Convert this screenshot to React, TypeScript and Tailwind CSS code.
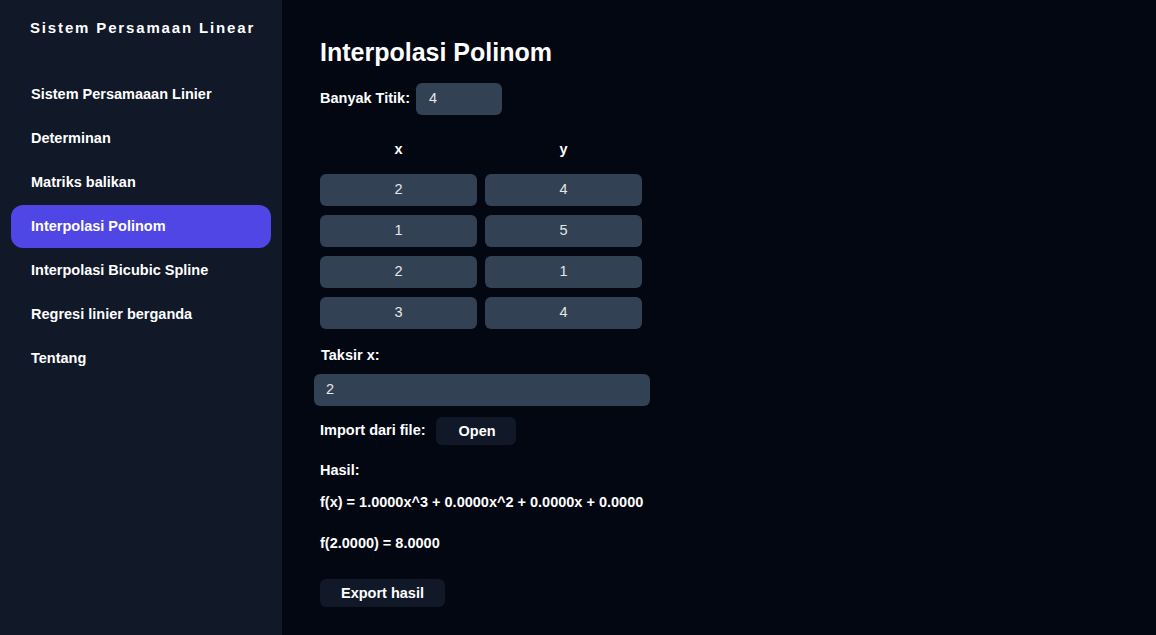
import React from "react";

const nav = [
  "Sistem Persamaaan Linier",
  "Determinan",
  "Matriks balikan",
  "Interpolasi Polinom",
  "Interpolasi Bicubic Spline",
  "Regresi linier berganda",
  "Tentang",
];

const rows = [
  ["2", "4"],
  ["1", "5"],
  ["2", "1"],
  ["3", "4"],
];

export default function App() {
  return (
    <div
      className="flex w-[1156px] h-[635px] overflow-hidden text-white"
      style={{ fontFamily: '"Liberation Sans", Arial, sans-serif' }}
    >
      <aside className="w-[282px] shrink-0 bg-[#111827] flex flex-col">
        <div className="pl-[30px] pt-[19px] text-[15px] font-bold tracking-[1.85px] leading-[18px]">
          Sistem Persamaan Linear
        </div>
        <nav className="flex flex-col gap-[1px] px-[11px] pt-[36px]">
          {nav.map((n) => (
            <div
              key={n}
              className={`h-[43px] flex items-center pl-[20px] pt-[1px] text-[14.5px] font-bold rounded-[12px] ${
                n === "Interpolasi Polinom" ? "bg-[#4f46e5]" : ""
              }`}
            >
              {n}
            </div>
          ))}
        </nav>
      </aside>
      <main className="flex-1 bg-[#030712] pl-[38px] pt-[37px] text-[14.5px]">
        <h1 className="text-[25px] font-bold leading-[30px]">Interpolasi Polinom</h1>
        <div className="flex items-center gap-[6px] mt-[16px]">
          <span className="font-bold">Banyak Titik:</span>
          <div className="w-[86px] h-[32px] rounded-[6px] bg-[#334155] flex items-center pl-[13px] text-[#e5e7eb]">
            4
          </div>
        </div>
        <div className="grid grid-cols-[157px_157px] gap-x-[8px] mt-[25px] w-fit">
          <div className="text-center font-bold h-[18px] leading-[18px]">x</div>
          <div className="text-center font-bold h-[18px] leading-[18px]">y</div>
        </div>
        <div className="grid grid-cols-[157px_157px] gap-x-[8px] gap-y-[9px] mt-[16px] w-fit">
          {rows.flat().map((v, i) => (
            <div
              key={i}
              className="h-[32px] rounded-[6px] bg-[#334155] flex items-center justify-center text-[#e5e7eb]"
            >
              {v}
            </div>
          ))}
        </div>
        <div className="font-bold mt-[17px] ml-[1px] leading-[18px]">Taksir x:</div>
        <div className="ml-[-6px] mt-[10px] w-[336px] h-[32px] rounded-[6px] bg-[#334155] flex items-center pl-[12px] text-[#e5e7eb]">
          2
        </div>
        <div className="flex items-center gap-[10px] mt-[11px]">
          <span className="font-bold">Import dari file:</span>
          <button className="w-[80px] h-[28px] rounded-[6px] bg-[#111827] font-bold pl-[3px] pt-[1px]">
            Open
          </button>
        </div>
        <div className="font-bold mt-[16px] leading-[18px]">Hasil:</div>
        <div className="font-bold mt-[14px] leading-[18px]">
          f(x) = 1.0000x^3 + 0.0000x^2 + 0.0000x + 0.0000
        </div>
        <div className="font-bold mt-[23px] leading-[18px]">f(2.0000) = 8.0000</div>
        <button className="mt-[27px] w-[125px] h-[28px] rounded-[6px] bg-[#111827] font-bold pt-[1px]">
          Export hasil
        </button>
      </main>
    </div>
  );
}
